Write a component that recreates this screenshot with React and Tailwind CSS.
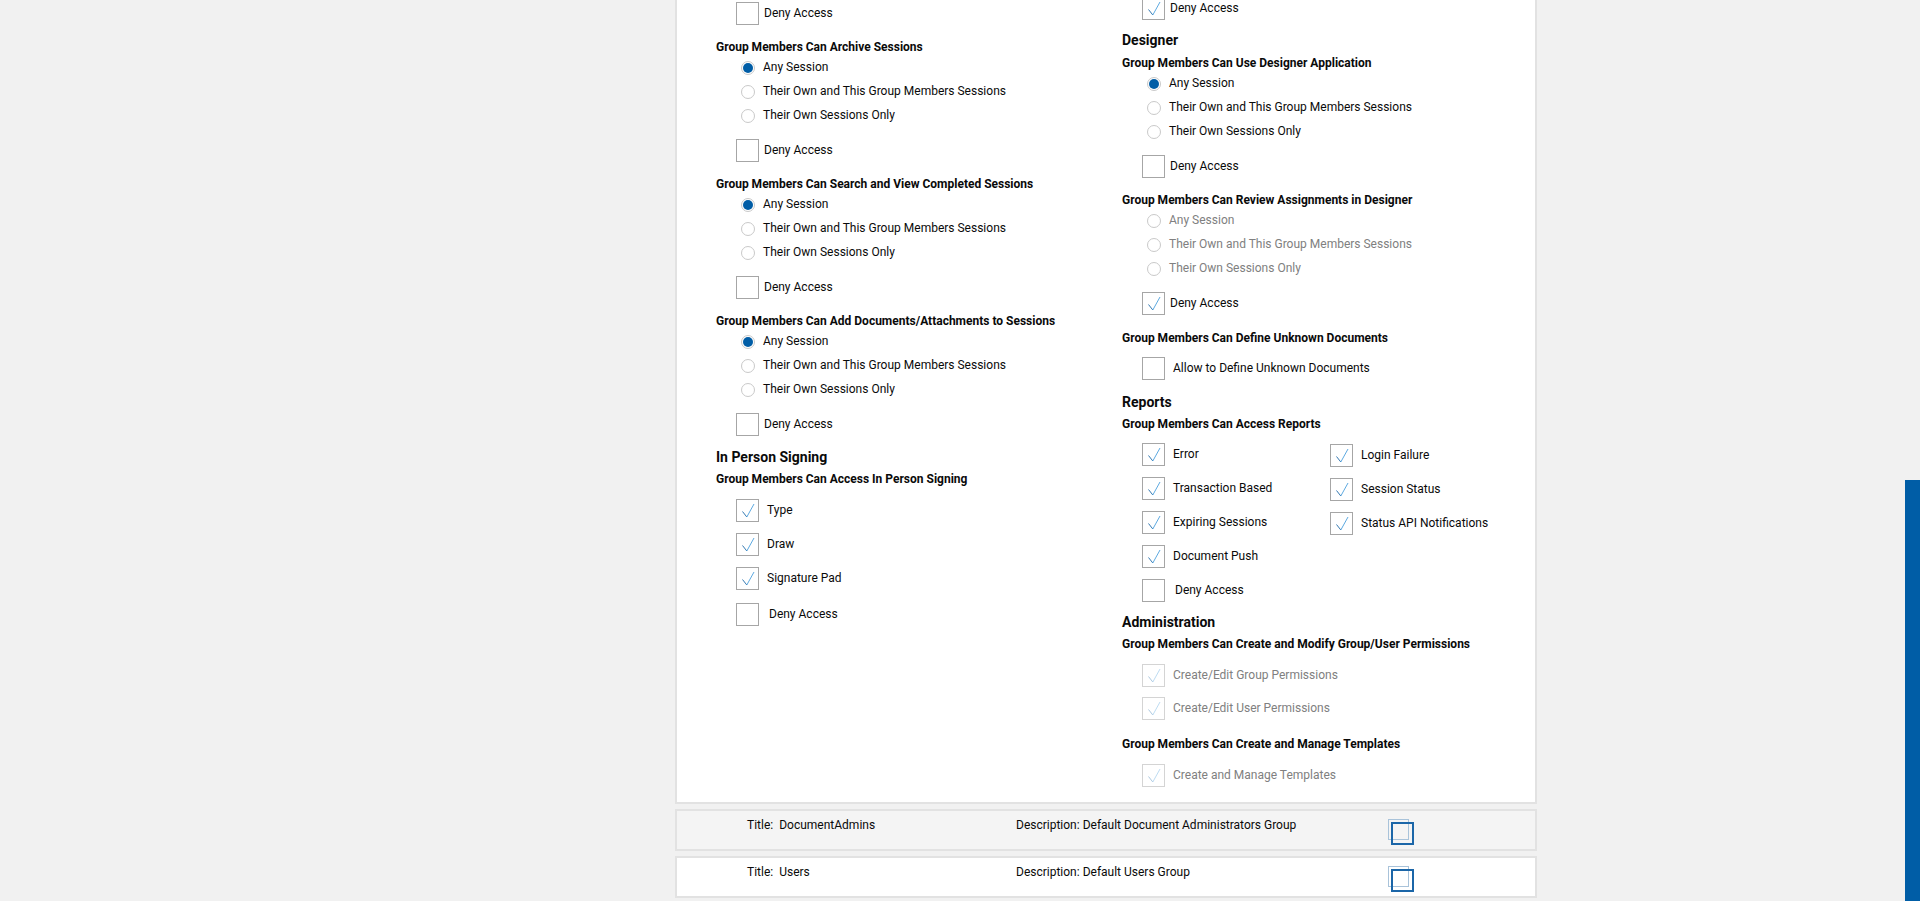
import React from 'react'

const SESSIONS = ['Any Session', 'Their Own and This Group Members Sessions', 'Their Own Sessions Only']

function Check({on, off}) {
    return (
        <span className={`flex h-[23px] w-[23px] shrink-0 items-center justify-center border bg-white ${off ? 'border-[#d4d4d4]' : 'border-[#a6a6a6]'}`}>
            {on && (
                <svg width="21" height="21" viewBox="0 0 21 21" fill="none" className={off ? 'opacity-40' : ''}>
                    <path d="M5.5 11.5L9.8 17" stroke="#1e6aa8" strokeWidth="0.9"/>
                    <path d="M9.8 17L17 4" stroke="#4b9fdc" strokeWidth="0.9"/>
                </svg>
            )}
        </span>
    )
}

function CheckRow({label, on, off, gap = 'gap-[5px]', className = ''}) {
    return (
        <div className={`flex h-[23px] items-center ${gap} ${className}`}>
            <Check on={on} off={off}/>
            <span className={`-mt-[2px] ${off ? 'text-[#808080]' : ''}`}>{label}</span>
        </div>
    )
}

function Radio({label, on, off}) {
    return (
        <div className="flex h-6 items-center pl-[5px]">
            <span className={`flex h-[14px] w-[14px] items-center justify-center rounded-full border border-[#c9c9c9] bg-white`}>
                {on && <span className="h-[10px] w-[10px] rounded-full bg-[#005da6]"/>}
            </span>
            <span className={`-mt-[2px] ml-[8px] ${off ? 'text-[#808080]' : ''}`}>{label}</span>
        </div>
    )
}

function Sub({children, className = ''}) {
    return <div className={`flex h-[19px] items-center font-bold ${className}`}>{children}</div>
}

function Section({children, className = ''}) {
    return <div className={`flex h-5 items-center text-[14px] font-bold ${className}`}>{children}</div>
}

function Sessions({title, deny, off}) {
    return (
        <div>
            <Sub>{title}</Sub>
            {SESSIONS.map((s) => <Radio key={s} label={s} on={s === 'Any Session' && !off} off={off}/>)}
            <CheckRow label="Deny Access" on={deny} className="mt-[11px]"/>
        </div>
    )
}

function CopyIcon() {
    return (
        <svg width="26" height="26" viewBox="0 0 26 26" fill="none">
            <rect x="0.5" y="0.5" width="20" height="20" stroke="#a9c3da"/>
            <rect x="4" y="4" width="21" height="21" fill="none" stroke="#1b66a8" strokeWidth="2"/>
        </svg>
    )
}

function GroupRow({title, description, alt}) {
    return (
        <div className={`mt-[5px] flex h-[42px] border-2 border-[#e2e2e2] pl-[70px] ${alt ? 'bg-[#f4f4f4]' : 'bg-white'}`}>
            <div className="flex w-[269px] pt-[6px]">
                <span>Title:</span>
                <span className="ml-[6px]">{title}</span>
            </div>
            <div className="w-[372px] pt-[6px]">Description: {description}</div>
            <div className="pt-[8px]"><CopyIcon/></div>
        </div>
    )
}

export default function App() {
    return (
        <div className="relative h-[901px] overflow-hidden bg-[#f1f1f1] font-['Roboto',sans-serif] text-[12px] leading-4 text-[#0a0a0a]">
            <div className="-mt-[3px] ml-[675px] w-[862px]">
                <div className="grid h-[807px] grid-cols-[406px_1fr] border-x-2 border-b-2 border-[#e2e2e2] bg-white pl-[39px]">
                    <div className="pt-[5px]">
                        <div className="pl-[20px]">
                            <CheckRow label="Deny Access"/>
                        </div>
                        <div className="mt-[12px] [&>div]:mb-[12px]">
                            <SessionsIndented title="Group Members Can Archive Sessions"/>
                            <SessionsIndented title="Group Members Can Search and View Completed Sessions"/>
                            <SessionsIndented title="Group Members Can Add Documents/Attachments to Sessions"/>
                        </div>
                        <Section className="-mt-px">In Person Signing</Section>
                        <Sub className="mt-[2px]">Group Members Can Access In Person Signing</Sub>
                        <div className="mt-[11px] flex flex-col gap-[11px] pl-[20px]">
                            <CheckRow label="Type" on gap="gap-[8px]"/>
                            <CheckRow label="Draw" on gap="gap-[8px]"/>
                            <CheckRow label="Signature Pad" on gap="gap-[8px]"/>
                            <CheckRow label="Deny Access" gap="gap-[10px]" className="mt-[2px]"/>
                        </div>
                    </div>
                    <div>
                        <div className="pl-[20px]">
                            <CheckRow label="Deny Access" on/>
                        </div>
                        <Section className="mt-[10px]">Designer</Section>
                        <div className="mt-[3px] pb-[12px]">
                            <SessionsIndented title="Group Members Can Use Designer Application"/>
                        </div>
                        <SessionsIndented title="Group Members Can Review Assignments in Designer" off deny/>
                        <Sub className="mt-[13px]">Group Members Can Define Unknown Documents</Sub>
                        <div className="mt-[10px] pl-[20px]">
                            <CheckRow label="Allow to Define Unknown Documents" gap="gap-[8px]"/>
                        </div>
                        <Section className="mt-[12px]">Reports</Section>
                        <Sub className="mt-[2px]">Group Members Can Access Reports</Sub>
                        <div className="mt-[10px] flex pl-[20px]">
                            <div className="flex w-[188px] flex-col gap-[11px]">
                                <CheckRow label="Error" on gap="gap-[8px]"/>
                                <CheckRow label="Transaction Based" on gap="gap-[8px]"/>
                                <CheckRow label="Expiring Sessions" on gap="gap-[8px]"/>
                                <CheckRow label="Document Push" on gap="gap-[8px]"/>
                                <CheckRow label="Deny Access" gap="gap-[10px]"/>
                            </div>
                            <div className="mt-px flex flex-col gap-[11px]">
                                <CheckRow label="Login Failure" on gap="gap-[8px]"/>
                                <CheckRow label="Session Status" on gap="gap-[8px]"/>
                                <CheckRow label="Status API Notifications" on gap="gap-[8px]"/>
                            </div>
                        </div>
                        <Section className="mt-[10px]">Administration</Section>
                        <Sub className="mt-[2px]">Group Members Can Create and Modify Group/User Permissions</Sub>
                        <div className="mt-[11px] flex flex-col gap-[10px] pl-[20px]">
                            <CheckRow label="Create/Edit Group Permissions" on off gap="gap-[8px]"/>
                            <CheckRow label="Create/Edit User Permissions" on off gap="gap-[8px]"/>
                        </div>
                        <Sub className="mt-[14px]">Group Members Can Create and Manage Templates</Sub>
                        <div className="mt-[11px] pl-[20px]">
                            <CheckRow label="Create and Manage Templates" on off gap="gap-[8px]"/>
                        </div>
                    </div>
                </div>
                <GroupRow alt title="DocumentAdmins" description="Default Document Administrators Group"/>
                <GroupRow title="Users" description="Default Users Group"/>
            </div>
            <div className="absolute bottom-0 right-0 h-[421px] w-[15px] bg-[#005da6]"/>
        </div>
    )
}

function SessionsIndented({title, off, deny}) {
    return (
        <div>
            <Sub>{title}</Sub>
            <div className="pl-[20px]">
                {SESSIONS.map((s) => <Radio key={s} label={s} on={s === 'Any Session' && !off} off={off}/>)}
                <CheckRow label="Deny Access" on={deny} className="mt-[11px]"/>
            </div>
        </div>
    )
}
